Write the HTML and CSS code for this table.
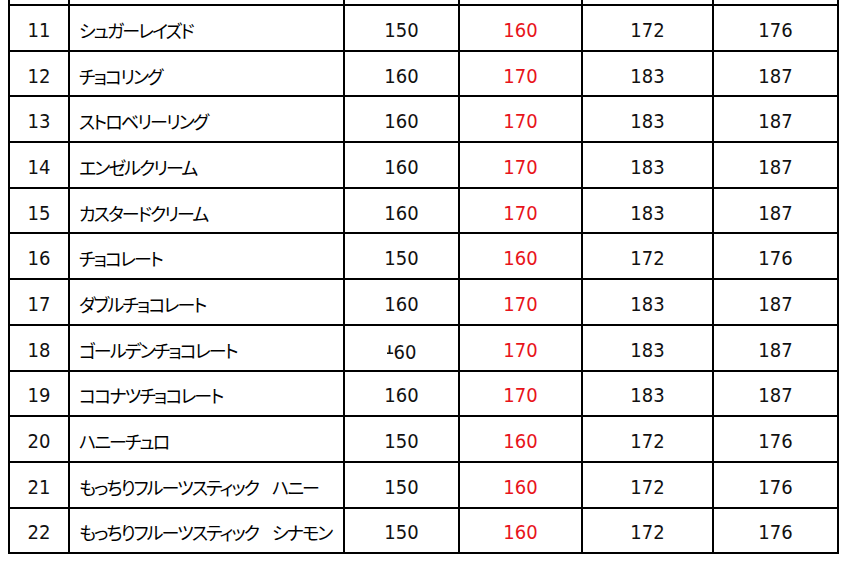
FILE: index.html
```html
<!DOCTYPE html>
<html lang="ja">
<head>
<meta charset="utf-8">
<title>価格表</title>
<link rel="stylesheet" href="styles.css">
</head>
<body>
<table class="price">
  <colgroup>
    <col class="c-no"><col class="c-name"><col class="c-p"><col class="c-p2"><col class="c-p3"><col class="c-p4">
  </colgroup>
  <tbody>
    <tr class="spacer"><td></td><td></td><td></td><td></td><td></td><td></td></tr>
    <tr><td class="no">11</td><td class="name">シュガーレイズド</td><td class="num">150</td><td class="num red">160</td><td class="num">172</td><td class="num">176</td></tr>
    <tr><td class="no">12</td><td class="name">チョコリング</td><td class="num">160</td><td class="num red">170</td><td class="num">183</td><td class="num">187</td></tr>
    <tr><td class="no">13</td><td class="name">ストロベリーリング</td><td class="num">160</td><td class="num red">170</td><td class="num">183</td><td class="num">187</td></tr>
    <tr><td class="no">14</td><td class="name">エンゼルクリーム</td><td class="num">160</td><td class="num red">170</td><td class="num">183</td><td class="num">187</td></tr>
    <tr><td class="no">15</td><td class="name">カスタードクリーム</td><td class="num">160</td><td class="num red">170</td><td class="num">183</td><td class="num">187</td></tr>
    <tr><td class="no">16</td><td class="name">チョコレート</td><td class="num">150</td><td class="num red">160</td><td class="num">172</td><td class="num">176</td></tr>
    <tr><td class="no">17</td><td class="name">ダブルチョコレート</td><td class="num">160</td><td class="num red">170</td><td class="num">183</td><td class="num">187</td></tr>
    <tr><td class="no">18</td><td class="name">ゴールデンチョコレート</td><td class="num"><span class="cut">1</span>60</td><td class="num red">170</td><td class="num">183</td><td class="num">187</td></tr>
    <tr><td class="no">19</td><td class="name">ココナツチョコレート</td><td class="num">160</td><td class="num red">170</td><td class="num">183</td><td class="num">187</td></tr>
    <tr><td class="no">20</td><td class="name">ハニーチュロ</td><td class="num">150</td><td class="num red">160</td><td class="num">172</td><td class="num">176</td></tr>
    <tr><td class="no">21</td><td class="name">もっちりフルーツスティック<span class="gap"></span>ハニー</td><td class="num">150</td><td class="num red">160</td><td class="num">172</td><td class="num">176</td></tr>
    <tr><td class="no">22</td><td class="name">もっちりフルーツスティック<span class="gap"></span>シナモン</td><td class="num">150</td><td class="num red">160</td><td class="num">172</td><td class="num">176</td></tr>
  </tbody>
</table>
</body>
</html>
```
FILE: styles.css
```css
html, body {
  margin: 0;
  padding: 0;
  background: #ffffff;
}
body {
  padding-left: 8px;
  font-family: "DejaVu Sans Condensed", "DejaVu Sans", "Noto Sans CJK JP", sans-serif;
  color: #111111;
}
.price {
  border-collapse: collapse;
  table-layout: fixed;
  width: 831px;
}
.c-no { width: 60px; }
.c-name { width: 275px; }
.c-p { width: 115px; }
.c-p2 { width: 123px; }
.c-p3 { width: 131px; }
.c-p4 { width: 125px; }
.price td {
  border: 2px solid #000000;
  height: 45.7px;
  padding: 4px 0 0 0;
  box-sizing: border-box;
  vertical-align: middle;
  font-size: 20px;
  line-height: 24px;
  white-space: nowrap;
  overflow: hidden;
}
.price tr.spacer td {
  border-top: none;
  height: 5px;
  padding: 0;
  line-height: 0;
}
.no, .num {
  text-align: center;
}
.price td.name {
  text-align: left;
  padding-left: 9px;
  font-family: "Noto Sans CJK JP", sans-serif;
  font-size: 18px;
  font-weight: 400;
  color: #000000;
  font-feature-settings: "palt" 1;
  letter-spacing: -1.9px;
}
.gap {
  display: inline-block;
  width: 14px;
}
.red {
  color: #e8141b;
}
.cut {
  display: inline-block;
  width: 7px;
  text-indent: -3px;
  overflow: hidden;
  clip-path: inset(10px 0 0 0);
}
```
